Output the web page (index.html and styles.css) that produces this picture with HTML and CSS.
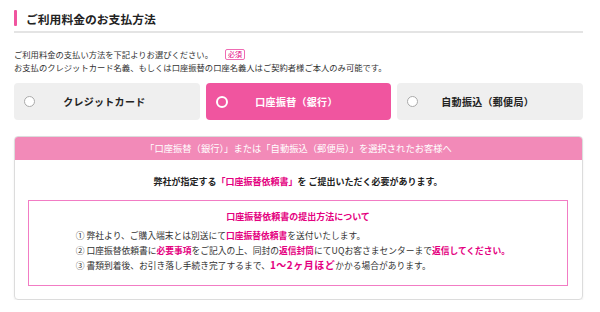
FILE: index.html
```html
<!DOCTYPE html>
<html lang="ja">
<head>
<meta charset="utf-8">
<link rel="stylesheet" href="styles.css">
</head>
<body>
<section class="section">
  <h2 class="title"><span class="bar"></span>ご利用料金のお支払方法</h2>
  <div class="desc">
    <p>ご利用料金の支払い方法を下記よりお選びください。<span class="badge">必須</span></p>
    <p>お支払のクレジットカード名義、もしくは口座振替の口座名義人はご契約者様ご本人のみ可能です。</p>
  </div>
  <div class="options">
    <div class="opt"><span class="radio"></span><span class="label">クレジットカード</span></div>
    <div class="opt opt-on"><span class="radio"></span><span class="label">口座振替（銀行）</span></div>
    <div class="opt"><span class="radio"></span><span class="label">自動振込（郵便局）</span></div>
  </div>
  <div class="info">
    <div class="info-head">「口座振替（銀行）」または「自動振込（郵便局）」を選択されたお客様へ</div>
    <div class="info-body">
      <p class="lead">弊社が指定する<span class="pk">「口座振替依頼書」</span>を ご提出いただく必要があります。</p>
      <div class="steps">
        <p class="steps-title">口座振替依頼書の提出方法について</p>
        <ol class="list">
          <li>① 弊社より、ご購入端末とは別送にて<b class="pk">口座振替依頼書</b>を送付いたします。</li>
          <li>② 口座振替依頼書に<b class="pk">必要事項</b>をご記入の上、同封の<b class="pk">返信封筒</b>にてUQお客さまセンターまで<b class="pk">返信してください。</b></li>
          <li>③ 書類到着後、お引き落し手続き完了するまで、<b class="pk big">1～2ヶ月ほど</b>かかる場合があります。</li>
        </ol>
      </div>
    </div>
  </div>
</section>
</body>
</html>
```

FILE: styles.css
```css
* { box-sizing: border-box; }
html, body { margin: 0; padding: 0; background: #fff; }
body {
  font-family: "Noto Sans CJK JP", "Noto Sans", sans-serif;
  color: #333;
}
p { margin: 0; }
.section { padding: 10px 17px 0 14px; }
.title {
  margin: 0;
  display: flex;
  align-items: center;
  gap: 9px;
  height: 23px;
  padding-bottom: 5px;
  border-bottom: 2px solid #e4e4e4;
  font-size: 11.8px;
  font-weight: 700;
  color: #222;
  line-height: 17px;
}
.bar {
  width: 3px;
  height: 16px;
  background: #f0559f;
  border-radius: 1px;
}
.desc {
  margin-top: 15px;
  font-size: 8.3px;
  line-height: 13px;
  color: #333;
}
.badge {
  display: inline-block;
  margin-left: 12px;
  padding: 0 2px;
  border: 1px solid #ef6bb3;
  border-radius: 2px;
  color: #e4007f;
  font-size: 7px;
  line-height: 9px;
  vertical-align: 1px;
}
.options {
  margin-top: 9px;
  display: grid;
  grid-template-columns: 1fr 1fr 1fr;
  gap: 6px;
}
.opt {
  height: 37px;
  display: flex;
  align-items: center;
  padding: 0 26px 0 10px;
  background: #efefef;
  border-radius: 4px;
  font-size: 10px;
  font-weight: 700;
  color: #222;
}
.radio {
  width: 11px;
  height: 11px;
  border-radius: 50%;
  border: 1px solid #aaa;
  background: #fff;
  flex: none;
}
.label { flex: 1; text-align: center; letter-spacing: 0.3px; }
.opt-on { background: #f0559f; color: #fff; }
.opt-on .radio {
  width: 12px;
  height: 12px;
  border: 2.5px solid #fff;
  background: #f0559f;
}
.info {
  margin-top: 16px;
  border: 1px solid #dcdcdc;
  border-radius: 4px;
  box-shadow: 0 1px 2px rgba(0,0,0,0.08);
  overflow: hidden;
}
.info-head {
  height: 23px;
  background: #f28ab8;
  color: #fff;
  font-size: 9.3px;
  line-height: 23px;
  text-align: center;
}
.info-body { padding: 15px 14px 13px 13px; }
.lead {
  text-align: center;
  font-size: 9px;
  font-weight: 700;
  line-height: 14px;
  color: #222;
}
.pk { color: #e4007f; font-weight: 700; }
.steps {
  margin-top: 11px;
  border: 1px solid #f27cc4;
  padding: 9px 10px 11px;
  text-align: center;
}
.steps-title {
  font-size: 9px;
  font-weight: 700;
  line-height: 14px;
  color: #e4007f;
}
.list {
  display: inline-block;
  margin: 5px 10px 0 0;
  padding: 0;
  list-style: none;
  text-align: left;
  font-size: 8.75px;
  line-height: 14.5px;
  color: #333;
}
.big { font-size: 10px; letter-spacing: 0.5px; }
```
